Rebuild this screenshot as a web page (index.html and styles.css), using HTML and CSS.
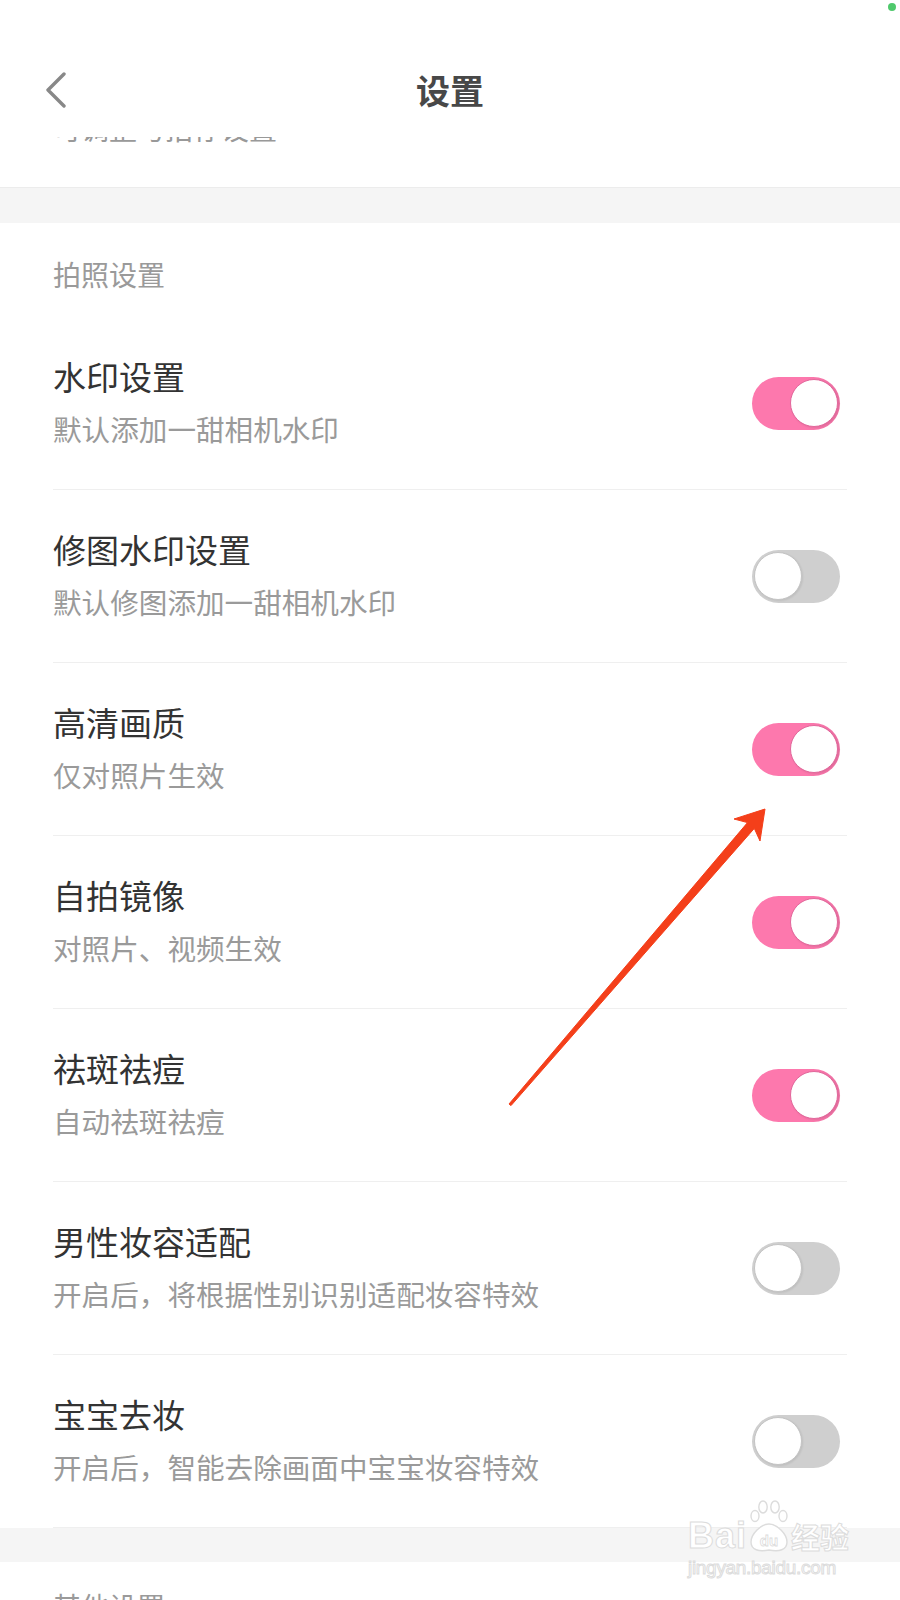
FILE: index.html
```html
<!DOCTYPE html>
<html lang="zh-CN">
<head>
<meta charset="UTF-8" />
  <meta name="viewport" content="width=device-width, initial-scale=1.0"/>
  <title>设置</title>
  <link rel="stylesheet" href="styles.css">
</head>
<body>
  <header class="topbar">
    <span class="status-dot"></span>
    <a class="back" href="#">
      <svg width="22" height="36" viewBox="0 0 22 36"><polyline points="19,2 3,18 19,34" fill="none" stroke="#888" stroke-width="3.4" stroke-linecap="round" stroke-linejoin="round"/></svg>
    </a>
    <h1>设置</h1>
    <span></span>
  </header>

  <div class="clip-row"><p>可调整与拍存设置</p></div>
  <div class="band"></div>

  <section class="group">
    <div class="group-label">拍照设置</div>

    <div class="row">
      <div class="row-text">
        <h3>水印设置</h3>
        <p>默认添加一甜相机水印</p>
      </div>
      <span class="switch on"><span class="knob"></span></span>
    </div>

    <div class="row">
      <div class="row-text">
        <h3>修图水印设置</h3>
        <p>默认修图添加一甜相机水印</p>
      </div>
      <span class="switch"><span class="knob"></span></span>
    </div>

    <div class="row">
      <div class="row-text">
        <h3>高清画质</h3>
        <p>仅对照片生效</p>
      </div>
      <span class="switch on"><span class="knob"></span></span>
    </div>

    <div class="row">
      <div class="row-text">
        <h3>自拍镜像</h3>
        <p>对照片、视频生效</p>
      </div>
      <span class="switch on"><span class="knob"></span></span>
    </div>

    <div class="row">
      <div class="row-text">
        <h3>祛斑祛痘</h3>
        <p>自动祛斑祛痘</p>
      </div>
      <span class="switch on"><span class="knob"></span></span>
    </div>

    <div class="row">
      <div class="row-text">
        <h3>男性妆容适配</h3>
        <p>开启后，将根据性别识别适配妆容特效</p>
      </div>
      <span class="switch"><span class="knob"></span></span>
    </div>

    <div class="row">
      <div class="row-text">
        <h3>宝宝去妆</h3>
        <p>开启后，智能去除画面中宝宝妆容特效</p>
      </div>
      <span class="switch"><span class="knob"></span></span>
    </div>
  </section>

  <div class="band band-low"></div>

  <section class="group">
    <div class="group-label group-label-low">其他设置</div>
  </section>

  <!-- red annotation arrow -->
  <svg class="arrow" width="900" height="1600" viewBox="0 0 900 1600">
    <polygon points="509,1104 747.5,822.6 734,819 765,809 760,841 754.3,828.4 511,1105.6" fill="#f43f1a" stroke="#f43f1a" stroke-width="1" stroke-linejoin="round"/>
  </svg>

  <div class="watermark">
    <div class="wm-top">
      <span class="wm-bai">Bai</span>
      <svg class="wm-paw" width="40" height="54" viewBox="0 0 40 54">
        <g fill="#fff" stroke="#dcdcdc" stroke-width="1.4">
          <ellipse cx="6" cy="16" rx="4" ry="5.5"/>
          <ellipse cx="14" cy="7" rx="4.2" ry="6"/>
          <ellipse cx="26" cy="7" rx="4.2" ry="6"/>
          <ellipse cx="34" cy="16" rx="4" ry="5.5"/>
          <path d="M20 24 C28 24 38 34 38 42 C38 50 30 52 20 50 C10 52 2 50 2 42 C2 34 12 24 20 24 Z"/>
        </g>
        <text x="20" y="46" text-anchor="middle" class="wm-du">du</text>
      </svg>
      <span class="wm-jy">经验</span>
    </div>
    <div class="wm-url">jingyan.baidu.com</div>
  </div>
</body>
</html>
```

FILE: styles.css
```css
* {
  box-sizing: border-box;
}
html, body {
  margin: 0;
  height: 1600px;
  overflow: hidden;
}
body {
  position: relative;
  background: #fff;
  font-family: "Noto Sans CJK SC", "Noto Sans", sans-serif;
  color: #333;
}
.topbar {
  position: relative;
  display: grid;
  grid-template-columns: 1fr auto 1fr;
  align-items: center;
  align-content: start;
  height: 137px;
  padding: 68px 45px 0;
  background: #fff;
}
.topbar h1 {
  margin: 0;
  font-size: 34px;
  line-height: 44px;
  font-weight: 700;
  color: #484848;
}
.back {
  display: flex;
  height: 44px;
  align-items: center;
}
.status-dot {
  position: absolute;
  top: 3px;
  right: 4px;
  width: 8px;
  height: 8px;
  border-radius: 50%;
  background: #4fc96c;
}
.clip-row {
  height: 50px;
  overflow: hidden;
  padding-left: 53px;
}
.clip-row p {
  margin: -23px 0 0;
  font-size: 28px;
  line-height: 28px;
  color: #999;
}
.band {
  height: 36px;
  background: #f5f5f5;
  border-top: 1px solid #ececec;
}
.band-low {
  height: 34px;
  border-top: none;
}
.group-label {
  height: 94px;
  padding: 31px 0 0 53px;
  font-size: 28px;
  line-height: 40px;
  color: #9a9a9a;
}
.group-label-low {
  padding-top: 24px;
}
.row {
  display: flex;
  align-items: center;
  justify-content: space-between;
  height: 173px;
  margin: 0 53px;
  padding-right: 7px;
  border-bottom: 1px solid #efefef;
}
.row-text {
  padding-bottom: 3px;
}
.row-text h3 {
  margin: 0;
  font-size: 33px;
  line-height: 44px;
  font-weight: 400;
  color: #333;
}
.row-text p {
  margin: 11px 0 0;
  font-size: 28.6px;
  line-height: 40px;
  color: #9a9a9a;
}
.switch {
  display: flex;
  align-items: center;
  width: 88px;
  height: 53px;
  padding: 0 2px;
  border-radius: 27px;
  background: #cfcfcf;
}
.switch.on {
  justify-content: flex-end;
  background: linear-gradient(90deg, #fd78ad 60%, #ef72a5);
}
.knob {
  width: 48px;
  height: 48px;
  border-radius: 50%;
  background: #fff;
  border: 1px solid #c4c4c4;
  box-shadow: 1px 1px 2px rgba(0,0,0,0.08);
}
.switch.on .knob {
  border-color: #e2679b;
}
.arrow {
  position: absolute;
  top: 0;
  left: 0;
  pointer-events: none;
}
.watermark {
  position: absolute;
  top: 1500px;
  left: 688px;
  font-family: "Liberation Sans", sans-serif;
  color: #fff;
  -webkit-text-stroke: 1px #dcdcdc;
}
.wm-top {
  display: flex;
  align-items: flex-end;
  gap: 2px;
}
.wm-bai {
  font-size: 36px;
  line-height: 36px;
  font-weight: 700;
  letter-spacing: 1px;
}
.wm-du {
  font-family: "Liberation Sans", sans-serif;
  font-size: 15px;
  font-weight: 700;
  fill: #fff;
  stroke: #dcdcdc;
  stroke-width: 0.8;
}
.wm-jy {
  font-family: "Noto Sans CJK SC", sans-serif;
  font-size: 29px;
  line-height: 36px;
  font-weight: 700;
}
.wm-url {
  margin-top: 4px;
  font-size: 19px;
  line-height: 20px;
  letter-spacing: -0.3px;
}
```
